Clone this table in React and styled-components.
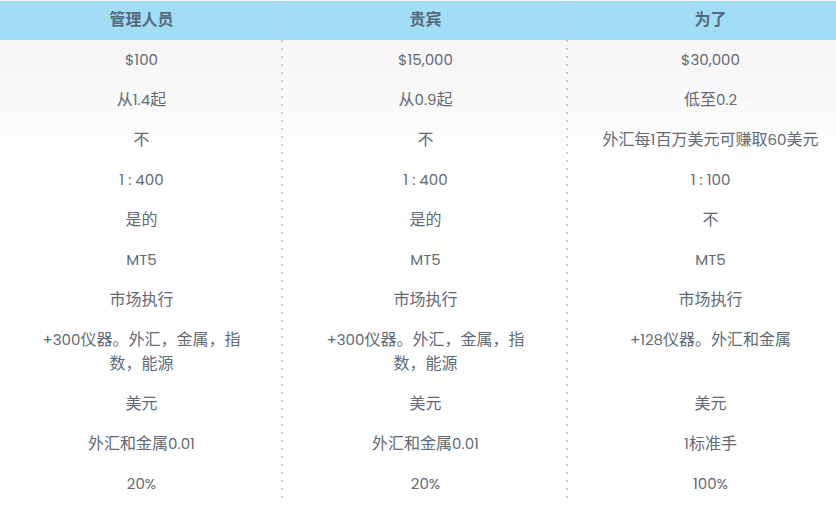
import React from 'react';
import styled, { createGlobalStyle } from 'styled-components';

const headers = ['管理人员', '贵宾', '为了'];

const rows = [
  ['$100', '$15,000', '$30,000'],
  ['从1.4起', '从0.9起', '低至0.2'],
  ['不', '不', '外汇每1百万美元可赚取60美元'],
  ['1 : 400', '1 : 400', '1 : 100'],
  ['是的', '是的', '不'],
  ['MT5', 'MT5', 'MT5'],
  ['市场执行', '市场执行', '市场执行'],
  ['+300仪器。外汇，金属，指数，能源', '+300仪器。外汇，金属，指数，能源', '+128仪器。外汇和金属'],
  ['美元', '美元', '美元'],
  ['外汇和金属0.01', '外汇和金属0.01', '1标准手'],
  ['20%', '20%', '100%'],
];

const GlobalStyle = createGlobalStyle`
  html, body {
    margin: 0;
    padding: 0;
    background: #fff;
    overflow: hidden;
  }
  body {
    font-family: "Poppins", "Lato", "Noto Sans CJK SC", sans-serif;
  }
`;

const Table = styled.div`
  display: grid;
  grid-template-columns: 283px 285px 285px;
  width: 853px;
  border-top: 1px solid #eef7fb;
  background: linear-gradient(to bottom, #a1def6 0, #a1def6 39px, #f7f5f6 39px, #faf9f9 100px, #fff 165px);
`;

const Cell = styled.div`
  box-sizing: border-box;
  text-align: center;
  padding: ${(props) => (props.$header ? '7px 30px 8px' : '8px 30px')};
  font-size: ${(props) => (props.$header ? '16px' : '15px')};
  font-weight: ${(props) => (props.$header ? 700 : 400)};
  line-height: 24px;
  color: ${(props) => (props.$header ? '#55697c' : '#626a75')};
  background-image: ${(props) =>
    props.$last ? 'none' : 'linear-gradient(to bottom, #c9cdd1 2px, transparent 2px)'};
  background-size: 2px 8px;
  background-repeat: repeat-y;
  background-position: right 0 top 0;
`;

const Lines = styled.div`
  height: ${(props) => props.$count * 24}px;
`;

const Han = styled.span`
  font-family: "Noto Sans CJK SC", sans-serif;
  font-size: 16px;
  line-height: 16px;
`;

// larger glyphs for the chinese runs, latin stays at the cell size
const Text = ({ children }) =>
  children
    .split(/([\u3000-\u303f\u4e00-\u9fff\uff00-\uffef]+)/)
    .filter(Boolean)
    .map((part, i) =>
      /[\u3000-\u303f\u4e00-\u9fff\uff00-\uffef]/.test(part) ? <Han key={i}>{part}</Han> : part
    );

const App = () => {
  return (
    <>
      <GlobalStyle />
      <Table>
        {headers.map((h, i) => (
          <Cell key={h} $header $last={i === 2}>{h}</Cell>
        ))}
        {rows.map((row, r) =>
          row.map((text, i) => (
            <Cell key={`${r}-${i}`} $last={i === 2}>
              <Lines $count={r === 7 ? 2 : 1}>
                <Text>{text}</Text>
              </Lines>
            </Cell>
          ))
        )}
      </Table>
    </>
  );
};

export default App;
